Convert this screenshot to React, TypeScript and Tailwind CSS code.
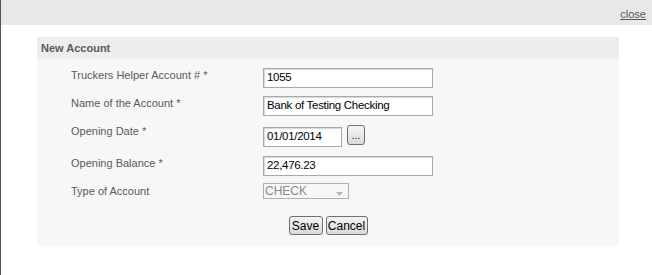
import React from "react";

function Field({ value, width = "w-[170px]", className = "" }: { value: string; width?: string; className?: string }) {
  return (
    <div
      className={`${width} h-[20px] bg-white border border-[#a9a9a9] shadow-[inset_1px_1px_1px_#d8d8d8] pl-[3px] flex items-center text-[11.5px] text-black leading-none tracking-[-0.3px] ${className}`}
    >
      {value}
    </div>
  );
}

function Label({ text, className = "" }: { text: string; className?: string }) {
  return <div className={`w-[192px] text-[11px] leading-[14px] text-[#5a5a5a] ${className}`}>{text}</div>;
}

export default function App() {
  return (
    <div className="w-[652px] h-[275px] bg-white border-l border-[#555] font-['Liberation_Sans',Arial,sans-serif] overflow-hidden">
      <div className="h-[25px] bg-[#e8e8e8] flex justify-end items-center pr-[6px] pt-[3px]">
        <span className="text-[11px] text-[#555] underline leading-none">close</span>
      </div>
      <div className="mt-[12px] ml-[36px] w-[582px]">
        <div className="h-[22px] bg-[#ededed] pl-[4px] flex items-center">
          <span className="text-[11px] font-bold text-[#5a5a5a]">New Account</span>
        </div>
        <div className="h-[187px] bg-[#f7f7f7] pt-[9px]">
          <div className="pl-[34px]">
            <div className="h-[28px] flex items-start">
              <Label text="Truckers Helper Account # *" />
              <Field value="1055" />
            </div>
            <div className="h-[28px] flex items-start">
              <Label text="Name of the Account *" />
              <Field value="Bank of Testing Checking" />
            </div>
            <div className="h-[32px] flex items-start">
              <Label text="Opening Date *" />
              <Field value="01/01/2014" width="w-[79px]" className="mt-[3px]" />
              <div className="ml-[5px] mt-[1px] w-[18px] h-[20px] rounded-[3px] border border-[#707070] bg-gradient-to-b from-[#f4f4f4] to-[#dcdcdc] flex items-end justify-center pb-[3px] text-[10px] leading-none text-black">
                ...
              </div>
            </div>
            <div className="h-[27px] flex items-start">
              <Label text="Opening Balance *" />
              <Field value="22,476.23" />
            </div>
            <div className="h-[33px] flex items-start">
              <Label text="Type of Account" className="mt-[1px]" />
              <div className="w-[86px] h-[16px] border border-[#b0b0b0] bg-[#f7f7f7] flex items-center justify-between pl-[1px] pr-[5px] text-[12px] leading-none text-[#8a8a8a]">
                <span>CHECK</span>
                <svg width="7" height="4" viewBox="0 0 7 4" className="mt-[6px]">
                  <path d="M0 0 L7 0 L3.5 4 Z" fill="#b5b5b5" />
                </svg>
              </div>
            </div>
          </div>
          <div className="flex justify-center gap-[3px]">
            <div className="w-[34px] h-[19px] rounded-[3px] border border-[#707070] bg-gradient-to-b from-[#f4f4f4] to-[#dadada] flex items-center justify-center text-[12px] leading-none text-black">
              Save
            </div>
            <div className="w-[42px] h-[19px] rounded-[3px] border border-[#707070] bg-gradient-to-b from-[#f4f4f4] to-[#dadada] flex items-center justify-center text-[12px] leading-none text-black">
              Cancel
            </div>
          </div>
        </div>
      </div>
    </div>
  );
}
